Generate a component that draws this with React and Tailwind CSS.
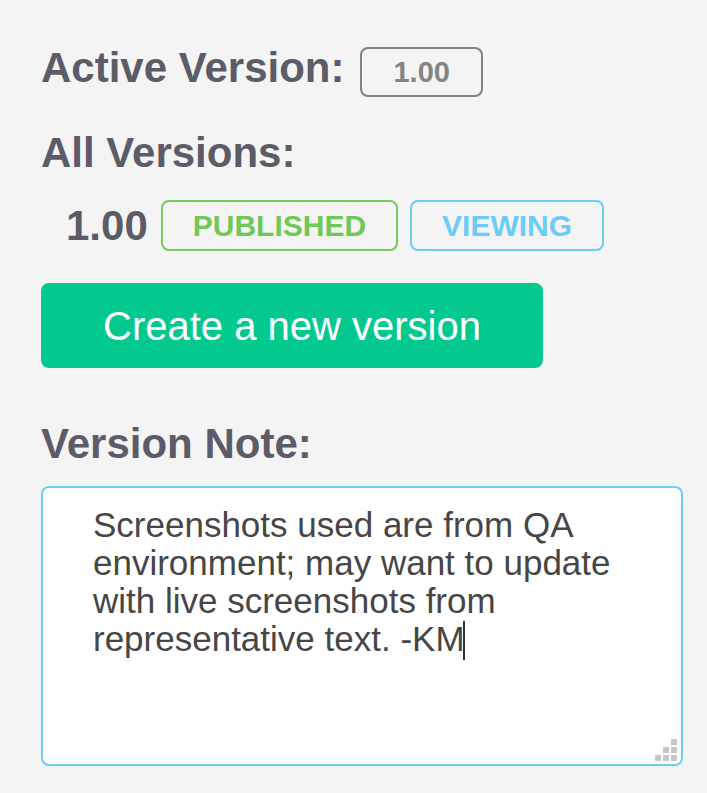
export default function App() {
  return (
    <div className="min-h-screen w-full bg-[#f4f4f4] pl-[41px] pt-[44px] font-['Liberation_Sans']">
      <div className="flex items-baseline">
        <h2 className="font-['Liberation_Sans'] text-[42px] font-bold leading-[48px] text-[#5b5c67]">Active Version:</h2>
        <span className="ml-[16px] flex h-[50px] items-center rounded-lg border-2 border-[#828282] px-[31px] font-['Liberation_Sans'] text-[29px] font-bold leading-[34px] text-[#848484]">
          1.00
        </span>
      </div>

      <h2 className="mt-[32px] font-['Liberation_Sans'] text-[42px] font-bold leading-[48px] text-[#5b5c67]">All Versions:</h2>

      <div className="mt-[23px] flex items-center">
        <span className="ml-[25px] font-['Liberation_Sans'] text-[42px] font-bold leading-[48px] text-[#5b5c67]">1.00</span>
        <span className="ml-[13px] flex h-[51px] items-center rounded-lg border-2 border-[#72cb5b] px-[30px] font-['Liberation_Sans'] text-[30px] font-bold leading-[34px] text-[#6fc857]">
          PUBLISHED
        </span>
        <span className="ml-3 flex h-[51px] items-center rounded-lg border-2 border-[#6ccbf7] px-[30px] font-['Liberation_Sans'] text-[30px] font-bold leading-[34px] text-[#6ccbf7]">
          VIEWING
        </span>
      </div>

      <button
        type="button"
        className="mt-[32px] flex h-[85px] w-[502px] items-center justify-center rounded-lg bg-[#03c98f] font-['Liberation_Sans'] text-[40px] leading-[46px] text-white"
      >
        Create a new version
      </button>

      <h2 className="mt-[52px] font-['Liberation_Sans'] text-[42px] font-bold leading-[48px] text-[#5b5c67]">Version Note:</h2>

      <div className="relative mt-[18px] h-[280px] w-[642px] rounded-lg border-2 border-[#6ccbf7] bg-white pl-[50px] pr-[48px] pt-[18px] font-['Liberation_Sans'] text-[35px] leading-[38px] text-[#464646]">
        Screenshots used are from QA environment; may want to update with live screenshots from representative text. -KM
        <span className="relative inline-block h-[30px] w-[2px]">
          <span className="absolute -left-[2px] top-0 h-[39px] w-[2px] bg-[#333]" />
        </span>
        <div className="absolute bottom-[3px] right-[4px] grid grid-cols-3 gap-[2px]">
          <span className="h-[6px] w-[6px]" />
          <span className="h-[6px] w-[6px]" />
          <span className="h-[6px] w-[6px] bg-[#c6c6c6]" />
          <span className="h-[6px] w-[6px]" />
          <span className="h-[6px] w-[6px] bg-[#c6c6c6]" />
          <span className="h-[6px] w-[6px] bg-[#c6c6c6]" />
          <span className="h-[6px] w-[6px] bg-[#c6c6c6]" />
          <span className="h-[6px] w-[6px] bg-[#c6c6c6]" />
          <span className="h-[6px] w-[6px] bg-[#c6c6c6]" />
        </div>
      </div>
    </div>
  )
}
